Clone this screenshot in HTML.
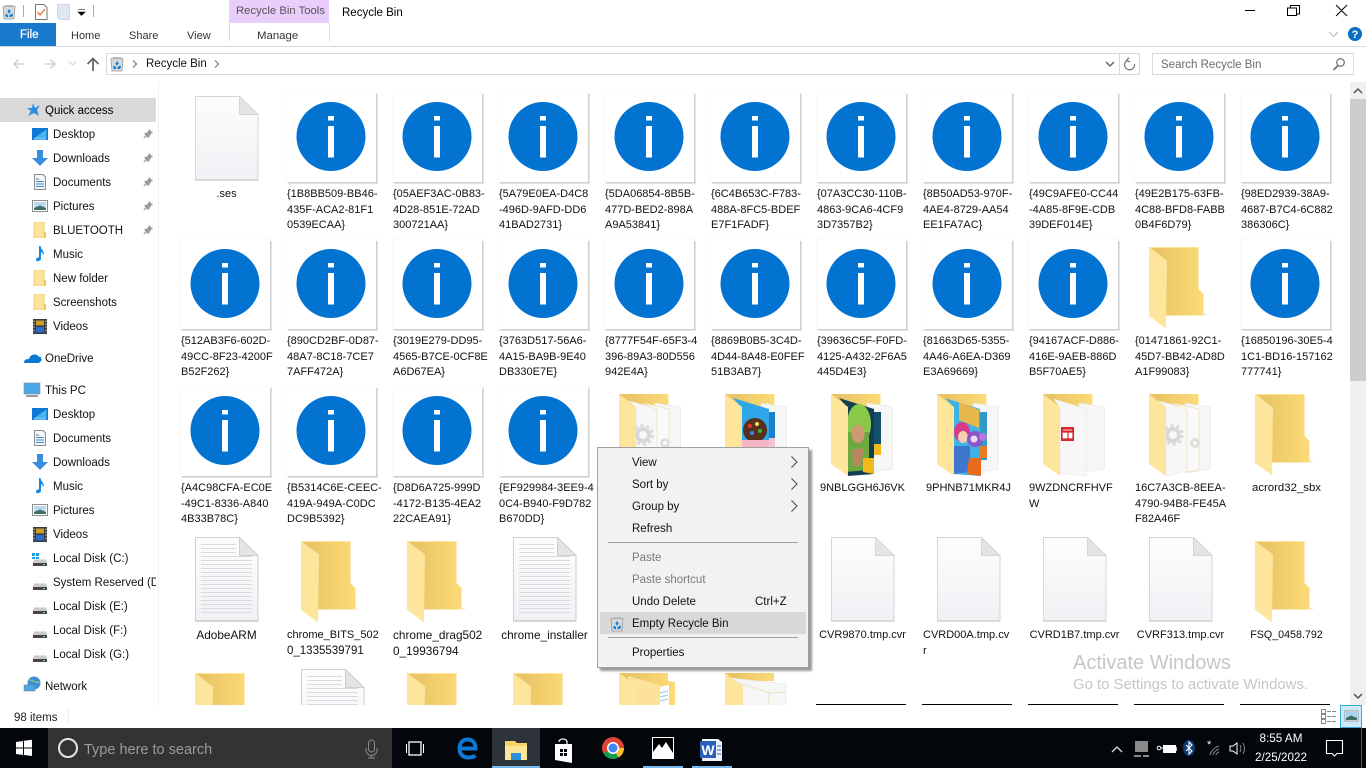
<!DOCTYPE html>
<html><head><meta charset="utf-8"><title>Recycle Bin</title>
<style>
html,body{margin:0;padding:0;width:1366px;height:768px;overflow:hidden;background:#fff}
body{position:relative;font-family:"Liberation Sans",sans-serif;font-size:11.5px;color:#111}
.a{position:absolute;white-space:nowrap}
.t{line-height:16px}
svg{position:absolute;overflow:hidden}
.row{position:absolute;left:180px;display:flex;font-size:11px;line-height:15.5px;color:#111}
.row span{flex:none;width:105px;padding-left:1px;white-space:nowrap}
.row span.c{width:91px;padding:0 0 0 1px;margin-right:14px;text-align:center}
.lc{font-size:11.8px}
.nav{left:53px}
.top{left:45px}
.m{left:632px;line-height:16px}
.g{color:#7a7a7a}
</style></head><body>

<svg width="0" height="0" style="position:absolute">
<defs>
<linearGradient id="fg" x1="0" x2="1" y1="0" y2="0"><stop offset="0.2" stop-color="#eac565"/><stop offset="1" stop-color="#fddb78"/></linearGradient>
<linearGradient id="pg" x1="0" x2="0" y1="0" y2="1"><stop offset="0" stop-color="#fdfdfd"/><stop offset="1" stop-color="#eff1f4"/></linearGradient>
<symbol id="info" viewBox="0 0 92 92" width="92" height="92">
<rect x="0" y="0" width="91.500" height="91.500" fill="#f4f4f4"/><rect x="2" y="2" width="90" height="90" fill="#e2e2e2"/><rect x="2" y="2" width="89" height="89" fill="#bcbcbc"/><rect x=".5" y=".5" width="89.800" height="89.800" fill="#fff"/>
<circle cx="45" cy="44.500" r="34.500" fill="#0373d1"/><rect x="42" y="24" width="6" height="4.500" fill="#fff"/><rect x="42" y="34" width="6" height="31.500" fill="#fff"/></symbol>
<symbol id="file" viewBox="0 0 64 85" width="64" height="85"><path d="M.5.5H44.500L63 18.500V84H.5Z" fill="url(#pg)" stroke="#d6d6d6"/><path d="M.5 84H63" stroke="#bcbcbc"/><path d="M44.500.5V18.500H63Z" fill="#e4e4e4" stroke="#d6d6d6"/></symbol>
<symbol id="lined" viewBox="0 0 64 85" width="64" height="85"><path d="M.5.5H44.500L63 18.500V84H.5Z" fill="url(#pg)" stroke="#cfcfcf"/><path d="M.5 84H63" stroke="#b4b4b4"/><path d="M44.500.5V18.500H63Z" fill="#e4e4e4" stroke="#cfcfcf"/><path d="M6 7.500H41M6 11.500H41M6 15.500H41M6 19.500H57M6 23.500H57M6 27.500H57M6 31.500H57M6 35.500H57M6 39.500H57M6 43.500H57M6 47.500H57M6 51.500H57M6 55.500H57M6 59.500H57M6 63.500H57M6 67.500H57M6 71.500H57M6 75.500H57" stroke="#d8dade"/></symbol>
<symbol id="folder" viewBox="0 0 60 86" width="60" height="86"><path d="M17 68.500H60L54.500 66V68.500Z" fill="#eee"/><path d="M0 0H49.500V42L54.500 47V68.500H17Z" fill="url(#fg)"/><path d="M0 0H49.500V1H1Z" fill="#fde49a"/><path d="M0 0L18 13.500L17 81.500L0 69Z" fill="#fde59c"/></symbol>
<symbol id="fback" viewBox="0 0 62 84" width="62" height="84"><path d="M0 0H49.500V10L17 80L0 70Z" fill="url(#fg)"/><path d="M36 9L61.500 13V75L36 79Z" fill="#f6f6f6" stroke="#e6e6e6" stroke-width=".6"/></symbol>
<symbol id="flap" viewBox="0 0 20 84" width="20" height="84"><path d="M0 0L17 13L17 82L0 70Z" fill="#fde59c"/></symbol>
<symbol id="gearf" viewBox="0 0 62 84" width="62" height="84"><use href="#fback" width="62" height="84"/><path d="M10 7L40 15V76L17 82V14Z" fill="#f7f7f7" stroke="#e8e8e8" stroke-width=".6"/><path d="M24 9L50 15V76L38 78V16Z" fill="#fafafa" stroke="#efe3b8" stroke-width=".8"/><circle cx="24" cy="41" r="6" fill="none" stroke="#d8d8d8" stroke-width="4"/><circle cx="24" cy="41" r="9.500" fill="none" stroke="#d8d8d8" stroke-width="2.500" stroke-dasharray="3 3"/><circle cx="46" cy="49" r="3.500" fill="none" stroke="#dedede" stroke-width="3"/><use href="#flap" width="20" height="84"/></symbol>
<symbol id="candy" viewBox="0 0 62 84" width="62" height="84"><use href="#fback" width="62" height="84"/><path d="M8 4L44 15V78L17 82V14Z" fill="#2fa6ea"/><path d="M44 18H50V66H44Z" fill="#1c7fc8"/><ellipse cx="30" cy="36" rx="12" ry="12" fill="#55301c"/><circle cx="25" cy="32" r="2" fill="#e33"/><circle cx="32" cy="30" r="2" fill="#fd3"/><circle cx="35" cy="37" r="2" fill="#3b3"/><circle cx="27" cy="39" r="2" fill="#38e"/><path d="M17 46H44V78L17 82Z" fill="#f7b6c6"/><path d="M44 44H50V64H44Z" fill="#f3c3d0"/><use href="#flap" width="20" height="84"/></symbol>
<symbol id="g5" viewBox="0 0 62 84" width="62" height="84"><use href="#fback" width="62" height="84"/><path d="M8 4L43 15V80L17 82V14Z" fill="#123f50"/><path d="M43 18H50V50H43Z" fill="#12506a"/><ellipse cx="28" cy="30" rx="12" ry="20" fill="#8bc94a"/><path d="M17 38L14 78L38 76L38 38Z" fill="#6da93f"/><ellipse cx="27" cy="40" rx="6.500" ry="9" fill="#cf9a72"/><path d="M21 56L33 54L30 72H22Z" fill="#b98660"/><path d="M32 64H43V80L32 78Z" fill="#f2b91e"/><path d="M43 50H50V61H43Z" fill="#f2b91e"/><use href="#flap" width="20" height="84"/></symbol>
<symbol id="witch" viewBox="0 0 62 84" width="62" height="84"><use href="#fback" width="62" height="84"/><path d="M8 4L43 15V82L17 80V14Z" fill="#3fb4e4"/><path d="M43 18H50V66H43Z" fill="#2e9ac8"/><path d="M22 8L42 16V34L22 26Z" fill="#e8b94a"/><ellipse cx="25" cy="38" rx="8" ry="10" fill="#d83a8a"/><ellipse cx="26" cy="43" rx="5" ry="6" fill="#f5cfb5"/><circle cx="38" cy="45" r="8" fill="#8e55c8"/><circle cx="37" cy="45" r="3.500" fill="#eadcf5"/><circle cx="46" cy="43" r="4" fill="#b37ad8"/><path d="M17 52H33V78L17 80Z" fill="#3f77cf"/><path d="M32 64H44V82L30 80Z" fill="#ea6a1c"/><path d="M43 52H50V64H43Z" fill="#e87a22"/><use href="#flap" width="20" height="84"/></symbol>
<symbol id="news" viewBox="0 0 62 84" width="62" height="84"><use href="#fback" width="62" height="84"/><path d="M11 5L43 15V82L17 79V14Z" fill="#f7f7f7" stroke="#e6e6e6" stroke-width=".6"/><rect x="18" y="33" width="13" height="14" fill="#d8262f"/><path d="M20 36H29M20 39H24V44H20ZM26 39H29V44H26Z" stroke="#fff" fill="#fff" stroke-width=".8"/><use href="#flap" width="20" height="84"/></symbol>
<symbol id="blue2" viewBox="0 0 62 84" width="62" height="84"><path d="M0 0H49V8L56 9V60H0Z" fill="url(#fg)"/><path d="M40 14L50 12V60H40Z" fill="#fff"/><path d="M41 20L49 18M41 24L49 22M41 28L49 26" stroke="#8ac8ea"/><path d="M9 3L41 12V60H9Z" fill="#fde29a"/><path d="M0 0L18 13V60H0Z" fill="#fde59c"/></symbol>
<symbol id="pagef" viewBox="0 0 62 84" width="62" height="84"><path d="M0 0H49V8H0Z" fill="url(#fg)"/><path d="M6 5L61 11V60H12Z" fill="#f6f6f6" stroke="#e0e0e0" stroke-width=".6"/><path d="M11 9L44 20V60M44 20L61 19" stroke="#ece2bf" fill="none"/><path d="M0 0L18 13V60H0Z" fill="#fde59c"/></symbol>

<symbol id="rb" viewBox="0 0 14 16" width="14" height="16"><path d="M1 2.500H13L12 15H2Z" fill="#d6d9dc" stroke="#9a9a9a" stroke-width=".8"/><path d="M3 1H11V2.500H3Z" fill="#bbb"/><path d="M7 5L9 8H7.400L8 9.500L5.800 9L6.600 7.200L5 8.200ZM3.800 9.500L6 11V13H4L3.300 11.200ZM10.500 9.500L11 11.500L9.500 13H7.500V11Z" fill="#0c7ed6"/></symbol>
<symbol id="desk" viewBox="0 0 16 16" width="16" height="16"><rect y="2" width="16" height="12" fill="#0d78d6"/><path d="M1.500 12.500L14.500 3.500V12.500Z" fill="#4eb4ee"/><path d="M2 13H14" stroke="#dff" stroke-width=".7"/></symbol>
<symbol id="down" viewBox="0 0 16 16" width="16" height="16"><path d="M5 0H11V8H16L8 16L0 8H5Z" fill="#3a8ee0"/></symbol>
<symbol id="docs" viewBox="0 0 16 16" width="16" height="16"><path d="M2.500.5H11L13.500 3V15.500H2.500Z" fill="#f4f4f4" stroke="#8c8c8c"/><path d="M4 5H7M4 7.500H12M4 10H12M4 12.500H12" stroke="#3a8ec8"/></symbol>
<symbol id="pics" viewBox="0 0 16 16" width="16" height="16"><rect x=".5" y="2.500" width="15" height="11" fill="#fff" stroke="#8c8c8c"/><rect x="2" y="4" width="12" height="8" fill="#b9d8ef"/><path d="M2 10L8 7.500L14 10V12H2Z" fill="#3f6d5f"/></symbol>
<symbol id="fold" viewBox="0 0 16 16" width="16" height="16"><path d="M2 0H12V16H2Z" fill="#fee49a" stroke="#eec867" stroke-width=".8"/><path d="M12 10H14V16H12Z" fill="#f0c85c"/></symbol>
<symbol id="mus" viewBox="0 0 16 16" width="16" height="16"><path d="M7 0H8.500C9 4 13 5 11.500 10C11.500 7.500 10 6.500 9 6V12.500C9 15 5 16 4 14.500C3.500 12.500 6 11 7 11.500Z" fill="#1187e6"/></symbol>
<symbol id="vid" viewBox="0 0 16 16" width="16" height="16"><rect x="1" y="1" width="14" height="15" fill="#3a3a3a"/><rect x="4" y="2.500" width="8" height="5" fill="#d09a2a"/><rect x="4" y="9" width="8" height="5.500" fill="#2a6cd0"/><path d="M2 2.500V15M14 2.500V15" stroke="#ddd" stroke-dasharray="1.500 1.500"/></symbol>
<symbol id="disk" viewBox="0 0 16 16" width="16" height="16"><path d="M2 8.500H14L15 12H1Z" fill="#c9c9c9"/><rect x="1" y="12" width="14" height="3" fill="#444"/><rect x="11" y="13" width="2" height="1" fill="#5f5"/></symbol>
<symbol id="pin" viewBox="0 0 12 12" width="12" height="12"><path d="M7 1L11 5L9.500 5.500L7.500 8V9.500L6.500 10L2 5.500L3 5H4.500L6.500 2.500ZM3.500 7L1 11L5 8.500Z" fill="#9b9b9b"/></symbol>
</defs></svg>

<!-- title bar -->
<div class="a" style="left:229px;top:0;width:100px;height:23px;background:#e9cdfa"></div>
<div class="a t" style="left:236px;top:3px;color:#555;font-size:11.300px">Recycle Bin Tools</div>
<div class="a t" style="left:342px;top:5px;color:#000;font-size:11.500px">Recycle Bin</div>
<svg style="left:2px;top:4px" width="14" height="16"><use href="#rb"/></svg>
<svg style="left:0;top:0" width="110" height="24">
<path d="M23.500 5V17M93.500 5V17" stroke="#aaa"/>
<path d="M35.500 4.500H44L47 7.500V19.500H35.500Z" fill="#fff" stroke="#777"/><path d="M37.500 12L40 15L45 9" fill="none" stroke="#e8682a" stroke-width="1.300"/>
<path d="M57.500 4.500H69.500V19.500H60L57.500 17Z" fill="#dfe7f3" stroke="#ccd6e6"/>
<path d="M78 9.500H85M78 12H85L81.500 15.500Z" fill="#000" stroke="#000" stroke-width=".6"/>
</svg>
<svg style="left:1240px;top:0" width="126" height="22"><path d="M5 10.500H15M50.500 8V5.500H59.500V14H57M50.500 8H56.500V15.500H47.500V8H50.500M96 5L107 16M107 5L96 16" fill="none" stroke="#000"/></svg>

<!-- tabs -->
<div class="a" style="left:0;top:23px;width:56px;height:23px;background:#1979ca"></div>
<div class="a t" style="left:20px;top:27px;color:#fff;font-size:11.500px;-webkit-text-stroke:.25px #fff">File</div>
<div class="a t" style="left:71px;top:28px;color:#333;font-size:11px">Home</div>
<div class="a t" style="left:129px;top:28px;color:#333;font-size:11px">Share</div>
<div class="a t" style="left:187px;top:28px;color:#333;font-size:11px">View</div>
<div class="a t" style="left:257px;top:28px;color:#333;font-size:11.400px">Manage</div>
<div class="a" style="left:229px;top:23px;width:99px;height:18px;border:1px solid #dadada;border-width:0 1px"></div>
<div class="a" style="left:0;top:46px;width:1366px;height:1px;background:#dadada"></div>
<svg style="left:1325px;top:26px" width="41" height="18"><path d="M4 6L8.500 10.500L13 6" fill="none" stroke="#b5b5b5"/><circle cx="30" cy="8" r="7" fill="#0a6fc4"/><text x="30" y="12" font-family="Liberation Sans,sans-serif" font-size="11" font-weight="bold" fill="#fff" text-anchor="middle">?</text></svg>

<!-- address row -->
<svg style="left:0;top:48px" width="106" height="30"><path d="M24 16H14M18.500 11.500L14 16L18.500 20.500M45 16H55M50.500 11.500L55 16L50.500 20.500" fill="none" stroke="#d0d0d0" stroke-width="1.500"/><path d="M69 13.500L72.500 17L76 13.500" fill="none" stroke="#d0d0d0"/><path d="M93 23V11M87.500 16L93 10.500L98.500 16" fill="none" stroke="#666" stroke-width="1.800"/></svg>
<div class="a" style="left:106px;top:53px;width:1032px;height:20px;border:1px solid #d9d9d9"></div>
<div class="a" style="left:1119px;top:54px;width:1px;height:20px;background:#d9d9d9"></div>
<svg style="left:110px;top:56px" width="14" height="16"><use href="#rb"/></svg>
<svg style="left:128px;top:54px" width="100" height="20"><path d="M5 6.500L8.500 10L5 13.500M87 6.500L90.500 10L87 13.500" fill="none" stroke="#777" stroke-width="1.200"/></svg>
<div class="a t" style="left:146px;top:56px;color:#111">Recycle Bin</div>
<svg style="left:1100px;top:54px" width="40" height="20"><path d="M6 8L10 12L14 8" fill="none" stroke="#666" stroke-width="1.500"/><path d="M27 6.500A5 5 0 1 0 34.500 10M29 3.500L26.500 6.500L30 8" fill="none" stroke="#777" stroke-width="1.300"/></svg>
<div class="a" style="left:1152px;top:53px;width:200px;height:20px;border:1px solid #d9d9d9"></div>
<div class="a t" style="left:1161px;top:57px;color:#6a6a6a">Search Recycle Bin</div>
<svg style="left:1332px;top:57px" width="14" height="14"><circle cx="8.500" cy="5.500" r="3.800" fill="none" stroke="#777" stroke-width="1.300"/><path d="M6 8.500L1.500 13" stroke="#777" stroke-width="1.800"/></svg>

<!-- nav -->
<div class="a" style="left:0;top:98px;width:156px;height:24px;background:#d9d9d9"></div>
<div class="a" style="left:158px;top:82px;width:1px;height:623px;background:#f0f0f0"></div>
<svg style="left:0;top:95px" width="158" height="610">
<g transform="translate(0,-95)">
<path d="M33 103L35 108L40 105L37 110L39 116L34 113L28 116L31 111L27 108L32 108Z" fill="#2a8fe0"/>
<use href="#desk" x="32" y="126"/><use href="#down" x="32" y="150"/><use href="#docs" x="32" y="174"/><use href="#pics" x="32" y="198"/><use href="#fold" x="32" y="222"/><use href="#mus" x="32" y="246"/><use href="#fold" x="32" y="270"/><use href="#fold" x="32" y="294"/><use href="#vid" x="32" y="318"/>
<use href="#pin" x="142" y="128"/><use href="#pin" x="142" y="152"/><use href="#pin" x="142" y="176"/><use href="#pin" x="142" y="200"/><use href="#pin" x="142" y="224"/>
<path d="M24 363C24 359 27 359 29 359C30 354 37 353 39 357C42 356 41 359 41 359C43 359 40 363 38 363Z" fill="#0a78d4"/>
<rect x="24" y="383" width="16" height="11" fill="#4aa8e8" stroke="#888" stroke-width=".6"/><rect x="26" y="395" width="12" height="2" fill="#999"/>
<use href="#desk" x="32" y="406"/><use href="#docs" x="32" y="430"/><use href="#down" x="32" y="454"/><use href="#mus" x="32" y="478"/><use href="#pics" x="32" y="502"/><use href="#vid" x="32" y="526"/>
<use href="#disk" x="32" y="551"/><path d="M32 553H35V556H32ZM36 553H39V556H36ZM32 557H35V559H32ZM36 557H39V559H36Z" fill="#1ba1e2"/>
<use href="#disk" x="32" y="575"/><use href="#disk" x="32" y="599"/><use href="#disk" x="32" y="623"/><use href="#disk" x="32" y="647"/>
<circle cx="34" cy="683" r="6.500" fill="#3d8fd8"/><path d="M28 680C32 679 36 684 40 682" stroke="#9fd05c" fill="none"/><rect x="24" y="685" width="11" height="6" fill="#4aa8e8" stroke="#777" stroke-width=".5"/>
</g></svg>
<div class="a t top" style="top:103px;color:#000">Quick access</div>
<div class="a t nav" style="top:127px">Desktop</div>
<div class="a t nav" style="top:151px">Downloads</div>
<div class="a t nav" style="top:175px">Documents</div>
<div class="a t nav" style="top:199px">Pictures</div>
<div class="a t nav" style="top:223px">BLUETOOTH</div>
<div class="a t nav" style="top:247px">Music</div>
<div class="a t nav" style="top:271px">New folder</div>
<div class="a t nav" style="top:295px">Screenshots</div>
<div class="a t nav" style="top:319px">Videos</div>
<div class="a t top" style="top:351px">OneDrive</div>
<div class="a t top" style="top:383px">This PC</div>
<div class="a t nav" style="top:407px">Desktop</div>
<div class="a t nav" style="top:431px">Documents</div>
<div class="a t nav" style="top:455px">Downloads</div>
<div class="a t nav" style="top:479px">Music</div>
<div class="a t nav" style="top:503px">Pictures</div>
<div class="a t nav" style="top:527px">Videos</div>
<div class="a t nav" style="top:551px">Local Disk (C:)</div>
<div class="a t nav" style="top:575px;width:103px;overflow:hidden">System Reserved (D:)</div>
<div class="a t nav" style="top:599px">Local Disk (E:)</div>
<div class="a t nav" style="top:623px">Local Disk (F:)</div>
<div class="a t nav" style="top:647px">Local Disk (G:)</div>
<div class="a t top" style="top:679px">Network</div>

<!-- content icons -->
<svg style="left:0;top:0" width="1350" height="705">
<use href="#file" x="195" y="96"/>
<use href="#info" x="286" y="92"/><use href="#info" x="392" y="92"/><use href="#info" x="498" y="92"/><use href="#info" x="604" y="92"/><use href="#info" x="710" y="92"/><use href="#info" x="816" y="92"/><use href="#info" x="922" y="92"/><use href="#info" x="1028" y="92"/><use href="#info" x="1134" y="92"/><use href="#info" x="1240" y="92"/>
<use href="#info" x="180" y="239"/><use href="#info" x="286" y="239"/><use href="#info" x="392" y="239"/><use href="#info" x="498" y="239"/><use href="#info" x="604" y="239"/><use href="#info" x="710" y="239"/><use href="#info" x="816" y="239"/><use href="#info" x="922" y="239"/><use href="#info" x="1028" y="239"/><use href="#folder" x="1149" y="247"/><use href="#info" x="1240" y="239"/>
<use href="#info" x="180" y="386"/><use href="#info" x="286" y="386"/><use href="#info" x="392" y="386"/><use href="#info" x="498" y="386"/>
<use href="#gearf" x="619" y="394"/><use href="#candy" x="725" y="394"/><use href="#g5" x="831" y="394"/><use href="#witch" x="937" y="394"/><use href="#news" x="1043" y="394"/><use href="#gearf" x="1149" y="394"/><use href="#folder" x="1255" y="394"/>
<use href="#lined" x="195" y="537"/><use href="#folder" x="301" y="541"/><use href="#folder" x="407" y="541"/><use href="#lined" x="513" y="537"/>
<use href="#file" x="831" y="537"/><use href="#file" x="937" y="537"/><use href="#file" x="1043" y="537"/><use href="#file" x="1149" y="537"/><use href="#folder" x="1255" y="541"/>
<use href="#folder" x="195" y="673"/><use href="#lined" x="301" y="669"/><use href="#folder" x="407" y="673"/><use href="#folder" x="513" y="673"/><use href="#blue2" x="619" y="673"/><use href="#pagef" x="725" y="673"/>
<path d="M816 704.500H906M922 704.500H1012M1028 704.500H1118M1134 704.500H1224M1240 704.500H1330" stroke="#000"/>
</svg>

<!-- labels -->
<div class="row" style="top:187px">
<span class="c">.ses</span><span>{1B8BB509-BB46-<br>435F-ACA2-81F1<br>0539ECAA}</span><span>{05AEF3AC-0B83-<br>4D28-851E-72AD<br>300721AA}</span><span>{5A79E0EA-D4C8<br>-496D-9AFD-DD6<br>41BAD2731}</span><span>{5DA06854-8B5B-<br>477D-BED2-898A<br>A9A53841}</span><span>{6C4B653C-F783-<br>488A-8FC5-BDEF<br>E7F1FADF}</span><span>{07A3CC30-110B-<br>4863-9CA6-4CF9<br>3D7357B2}</span><span>{8B50AD53-970F-<br>4AE4-8729-AA54<br>EE1FA7AC}</span><span>{49C9AFE0-CC44<br>-4A85-8F9E-CDB<br>39DEF014E}</span><span>{49E2B175-63FB-<br>4C88-BFD8-FABB<br>0B4F6D79}</span><span>{98ED2939-38A9-<br>4687-B7C4-6C882<br>386306C}</span>
</div>
<div class="row" style="top:334px">
<span>{512AB3F6-602D-<br>49CC-8F23-4200F<br>B52F262}</span><span>{890CD2BF-0D87-<br>48A7-8C18-7CE7<br>7AFF472A}</span><span>{3019E279-DD95-<br>4565-B7CE-0CF8E<br>A6D67EA}</span><span>{3763D517-56A6-<br>4A15-BA9B-9E40<br>DB330E7E}</span><span>{8777F54F-65F3-4<br>396-89A3-80D556<br>942E4A}</span><span>{8869B0B5-3C4D-<br>4D44-8A48-E0FEF<br>51B3AB7}</span><span>{39636C5F-F0FD-<br>4125-A432-2F6A5<br>445D4E3}</span><span>{81663D65-5355-<br>4A46-A6EA-D369<br>E3A69669}</span><span>{94167ACF-D886-<br>416E-9AEB-886D<br>B5F70AE5}</span><span>{01471861-92C1-<br>45D7-BB42-AD8D<br>A1F99083}</span><span>{16850196-30E5-4<br>1C1-BD16-157162<br>777741}</span>
</div>
<div class="row" style="top:481px">
<span>{A4C98CFA-EC0E<br>-49C1-8336-A840<br>4B33B78C}</span><span>{B5314C6E-CEEC-<br>419A-949A-C0DC<br>DC9B5392}</span><span>{D8D6A725-999D<br>-4172-B135-4EA2<br>22CAEA91}</span><span>{EF929984-3EE9-4<br>0C4-B940-F9D782<br>B670DD}</span><span></span><span></span><span class="c">9NBLGGH6J6VK</span><span class="c">9PHNB71MKR4J</span><span>9WZDNCRFHVF<br>W</span><span>16C7A3CB-8EEA-<br>4790-94B8-FE45A<br>F82A46F</span><span class="c" style="font-size:11.400px">acrord32_sbx</span>
</div>
<div class="row" style="top:628px">
<span class="c lc">AdobeARM</span><span style="font-size:11px">chrome_BITS_502<br><span style="font-size:11.500px;padding:0">0_1335539791</span></span><span class="lc">chrome_drag502<br>0_19936794</span><span class="c lc">chrome_installer</span><span></span><span></span><span class="c">CVR9870.tmp.cvr</span><span>CVRD00A.tmp.cv<br>r</span><span class="c">CVRD1B7.tmp.cvr</span><span class="c">CVRF313.tmp.cvr</span><span class="c" style="font-size:10.700px">FSQ_0458.792</span>
</div>

<!-- activate -->
<div class="a" style="left:1073px;top:651px;font-size:20px;line-height:24px;color:#c6c6c6">Activate Windows</div>
<div class="a" style="left:1073px;top:676px;font-size:14.900px;line-height:18px;color:#c6c6c6">Go to Settings to activate Windows.</div>

<!-- scrollbar -->
<div class="a" style="left:1350px;top:82px;width:16px;height:623px;background:#f0f0f0"></div>
<div class="a" style="left:1350px;top:99px;width:16px;height:282px;background:#cdcdcd"></div>
<svg style="left:1350px;top:82px" width="16" height="623"><path d="M4 11L8 7L12 11M4 612L8 616L12 612" fill="none" stroke="#555" stroke-width="1.500"/></svg>

<!-- status -->
<div class="a t" style="left:14px;top:710px;color:#222">98 items</div>
<div class="a" style="left:68px;top:708px;width:1px;height:16px;background:#eee"></div>
<svg style="left:1320px;top:705px" width="46" height="23"><path d="M1.500 4.500H5.500V8.500H1.500ZM1.500 9.500H5.500V13.500H1.500ZM1.500 14.500H5.500V18.500H1.500Z" fill="none" stroke="#888"/><path d="M7 6.500H17M7 11.500H17M7 16.500H17" stroke="#888" stroke-dasharray="4 1"/><rect x="20.500" y=".5" width="21" height="22" fill="#cde8f6" stroke="#3aa8dc"/><rect x="25" y="6" width="13" height="10" fill="#fff" stroke="#777" stroke-width=".7"/><rect x="26" y="7" width="11" height="8" fill="#a9d3ee"/><path d="M26 13L31 10.500L37 13V15H26Z" fill="#3f6d5f"/></svg>

<!-- context menu -->
<div class="a" style="left:597px;top:447px;width:210px;height:219px;background:#f2f2f2;border:1px solid #a0a0a0;box-shadow:3px 3px 2px rgba(0,0,0,.4)"></div>
<div class="a" style="left:600px;top:612px;width:206px;height:22px;background:#d8d8d8"></div>
<div class="a" style="left:608px;top:542px;width:190px;height:1px;background:#a0a0a0"></div>
<div class="a" style="left:608px;top:637px;width:190px;height:1px;background:#a0a0a0"></div>
<svg style="left:788px;top:452px" width="12" height="66"><path d="M3.500 4.500L9 10L3.500 15.500M3.500 26.500L9 32L3.500 37.500M3.500 48.500L9 54L3.500 59.500" fill="none" stroke="#445"/></svg>
<svg style="left:610px;top:616px" width="14" height="16"><use href="#rb"/></svg>
<div class="a m" style="top:455px">View</div>
<div class="a m" style="top:477px">Sort by</div>
<div class="a m" style="top:499px">Group by</div>
<div class="a m" style="top:521px">Refresh</div>
<div class="a m g" style="top:550px">Paste</div>
<div class="a m g" style="top:572px">Paste shortcut</div>
<div class="a m" style="top:594px">Undo Delete</div>
<div class="a" style="left:755px;top:594px;line-height:16px">Ctrl+Z</div>
<div class="a m" style="top:616px">Empty Recycle Bin</div>
<div class="a m" style="top:645px">Properties</div>

<!-- taskbar -->
<div class="a" style="left:0;top:728px;width:1366px;height:40px;background:#03060a"></div>
<div class="a" style="left:48px;top:728px;width:344px;height:40px;background:#333"></div>
<div class="a" style="left:492px;top:728px;width:48px;height:40px;background:#2d3338"></div>
<div class="a" style="left:492px;top:766px;width:48px;height:2px;background:#76b9ed"></div>
<div class="a" style="left:643px;top:766px;width:40px;height:2px;background:#76b9ed"></div>
<div class="a" style="left:692px;top:766px;width:40px;height:2px;background:#76b9ed"></div>
<div class="a" style="left:84px;top:740px;font-size:14.500px;line-height:20px;color:#9a9a9a">Type here to search</div>
<svg style="left:0;top:728px" width="760" height="40">
<path d="M16 14L23 13V19.500H16ZM24 12.800L32 11.800V19.500H24ZM16 20.500H23V27L16 26ZM24 20.500H32V28L24 27Z" fill="#fff"/>
<circle cx="68" cy="20" r="9" fill="none" stroke="#e4e4e4" stroke-width="2"/>
<rect x="368.500" y="12" width="6" height="12" rx="3" fill="none" stroke="#8a8a8a"/><path d="M366 20V22A5.500 5.500 0 0 0 377 22V20M371.500 27.500V30M368 30H375" fill="none" stroke="#8a8a8a"/>
<rect x="409" y="14" width="12" height="13" fill="none" stroke="#fff" stroke-width="1.300"/><path d="M406.500 16V25M423.500 16V25" stroke="#fff"/>
<path d="M460 20.500H475.500C475.500 14 471.500 11.500 467.500 11.500C462 11.500 459.500 15.500 459.500 20.500C459.500 26.500 463.500 29.500 468 29.500C471 29.500 474 28.800 475.500 27.500" fill="none" stroke="#0a78d4" stroke-width="4"/>
<path d="M505 13H515L517 15H527V24H505Z" fill="#f6d365"/><path d="M505 18H527V32H505Z" fill="#fde59a"/><rect x="511" y="25" width="10" height="7" fill="#2a8fd8"/>
<path d="M555 16H572V35L555 32Z" fill="#fff"/><path d="M559 14C559 10 567 10 567 14V17" fill="none" stroke="#fff" stroke-width="1.200"/><path d="M560 21H563V24H560ZM564 21H567V24H564ZM560 25H563V28H560ZM564 25H567V28H564Z" fill="#03060a"/>
<circle cx="613" cy="20" r="11" fill="#db4437"/><path d="M613 20L603.500 25.500A11 11 0 0 0 618.500 29.500Z" fill="#0f9d58"/><path d="M613 20H624A11 11 0 0 1 618.500 29.500Z" fill="#fbc02d"/><circle cx="613" cy="20" r="6" fill="#fff"/><circle cx="613" cy="20" r="4.500" fill="#4285f4"/>
<rect x="652" y="9" width="22" height="22" fill="#fff"/><rect x="653" y="10" width="20" height="20" fill="#000"/><path d="M653 30V24L659 16L662 20L666 14L673 25V30Z" fill="#fff"/>
<path d="M702 11H718L722 14V33H702Z" fill="#eef3fb"/><rect x="700" y="13" width="16" height="17" fill="#2a5fb8"/><text x="708" y="27" font-family="Liberation Sans,sans-serif" font-size="14" font-weight="bold" fill="#fff" text-anchor="middle">W</text><path d="M717 18H721M717 22H721M717 26H721" stroke="#2a5fb8"/>
</svg>
<svg style="left:1105px;top:728px" width="261" height="40">
<path d="M7 24L12 19L17 24" fill="none" stroke="#ddd" stroke-width="1.300"/>
<rect x="30" y="13" width="13" height="11" fill="#8a8a8a"/><path d="M29 28H36M38 28H44" stroke="#8a8a8a" stroke-width="2"/>
<circle cx="54" cy="20" r="1.800" fill="none" stroke="#fff"/><rect x="58.500" y="17.500" width="12" height="7" fill="#fff" stroke="#fff"/><path d="M71 19V23" stroke="#fff" stroke-width="1.500"/><path d="M56 20H58" stroke="#fff"/>
<ellipse cx="84" cy="20" rx="6" ry="8" fill="#0c3a78"/><path d="M81 17L87 23L84 26V14L87 17L81 23" fill="none" stroke="#fff" stroke-width="1.100"/>
<text x="102" y="20" font-family="Liberation Sans,sans-serif" font-size="11" fill="#fff">*</text><path d="M105 27A13 13 0 0 1 114 18M108 27A9 9 0 0 1 114 21M111 27A5 5 0 0 1 114 24" fill="none" stroke="#888"/>
<path d="M125 18H128L132 15V26L128 23H125Z" fill="none" stroke="#fff"/><path d="M135 17Q137 20.500 135 24M138 15Q141 20.500 138 26" fill="none" stroke="#888"/>
<path d="M221.500 12.500H237.500V25.500H232L229.500 28L227 25.500H221.500Z" fill="none" stroke="#fff" stroke-width="1.100"/>
</svg>
<div class="a" style="left:1240px;top:731px;width:82px;text-align:center;color:#fff;font-size:11.700px;line-height:16px">8:55 AM</div>
<div class="a" style="left:1240px;top:750px;width:82px;text-align:center;color:#fff;font-size:11.700px;line-height:16px">2/25/2022</div>
<div class="a" style="left:1361px;top:728px;width:1px;height:40px;background:#555"></div>
</body></html>
